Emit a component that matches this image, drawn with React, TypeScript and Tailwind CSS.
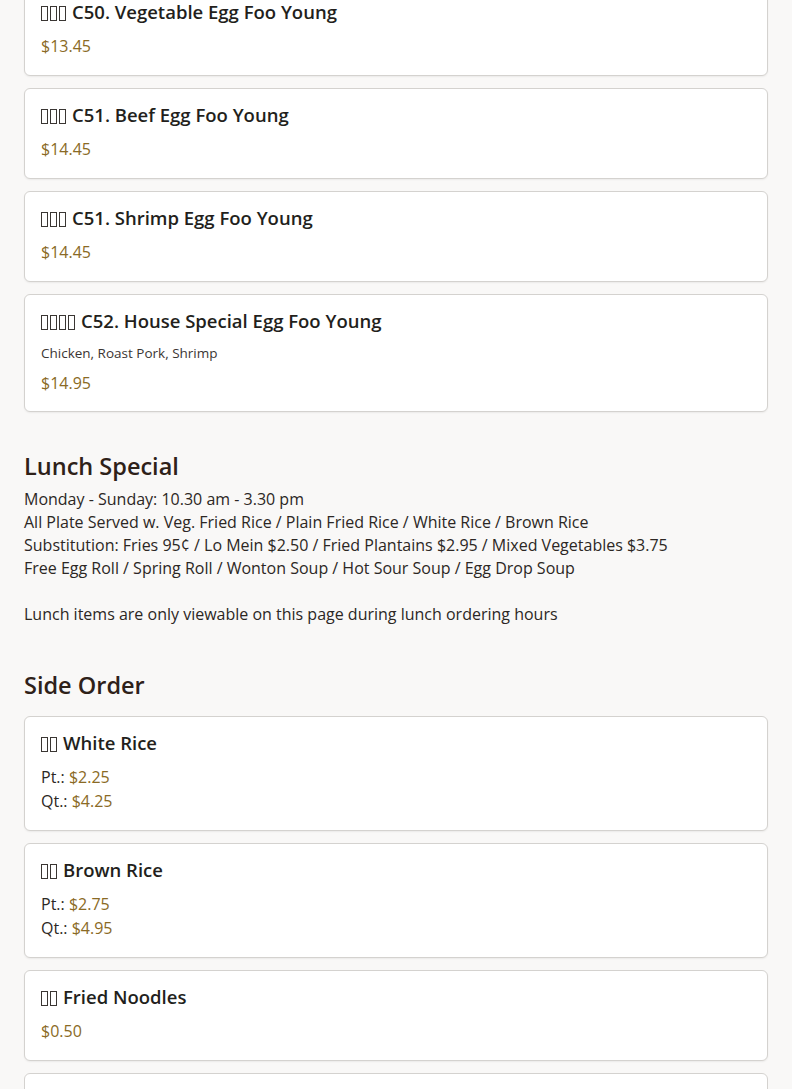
import React from "react";

type Item = {
  zh: number;
  name: string;
  desc?: string;
  price?: string;
  sizes?: { label: string; price: string }[];
};

// zh = number of Chinese glyphs shown as missing-glyph boxes in the original
const eggFooYoung: Item[] = [
  { zh: 3, name: "C50. Vegetable Egg Foo Young", price: "$13.45" },
  { zh: 3, name: "C51. Beef Egg Foo Young", price: "$14.45" },
  { zh: 3, name: "C51. Shrimp Egg Foo Young", price: "$14.45" },
  {
    zh: 4,
    name: "C52. House Special Egg Foo Young",
    desc: "Chicken, Roast Pork, Shrimp",
    price: "$14.95",
  },
];

const sideOrder: Item[] = [
  {
    zh: 2,
    name: "White Rice",
    sizes: [
      { label: "Pt.:", price: "$2.25" },
      { label: "Qt.:", price: "$4.25" },
    ],
  },
  {
    zh: 2,
    name: "Brown Rice",
    sizes: [
      { label: "Pt.:", price: "$2.75" },
      { label: "Qt.:", price: "$4.95" },
    ],
  },
  { zh: 2, name: "Fried Noodles", price: "$0.50" },
];

function Tofu({ count }: { count: number }) {
  return (
    <span aria-hidden className="inline-flex gap-[2px] mr-[6px] align-[-2px]">
      {Array.from({ length: count }).map((_, i) => (
        <span key={i} className="inline-block w-[7px] h-[15px] border border-[#3a3633]" />
      ))}
    </span>
  );
}

function MenuCard({ item }: { item: Item }) {
  return (
    <div
      className={`bg-white border border-[#d4d2cf] rounded-[6px] shadow-[0_1px_2px_rgba(0,0,0,0.06)] px-4 pt-[14px] ${
        item.desc ? "pb-4" : "pb-[17px]"
      }`}
    >
      <h3 className="text-[18.5px] leading-6 font-semibold text-[#231f1c]">
        <Tofu count={item.zh} />
        {item.name}
      </h3>
      {item.desc && <p className="mt-[10px] text-[13.5px] leading-5 text-[#3b3532]">{item.desc}</p>}
      {item.price && (
        <p className={`${item.desc ? "mt-2" : "mt-[10px]"} text-[16px] leading-6 text-[#8a6a25]`}>{item.price}</p>
      )}
      {item.sizes && (
        <div className="mt-[10px]">
          {item.sizes.map((s) => (
            <p key={s.label} className="text-[16px] leading-6 text-[#2c2724]">
              {s.label} <span className="text-[#8a6a25]">{s.price}</span>
            </p>
          ))}
        </div>
      )}
    </div>
  );
}

export default function App() {
  return (
    <div className="min-h-screen bg-[#f9f8f7] font-['Open_Sans',sans-serif] overflow-hidden">
      <div className="px-6 -mt-[15px] pb-10">
        <div className="flex flex-col gap-3">
          {eggFooYoung.map((it) => (
            <MenuCard key={it.name} item={it} />
          ))}
        </div>

        <h2 className="mt-[38px] text-[23.5px] leading-8 font-semibold text-[#2e2119]">Lunch Special</h2>
        <div className="mt-[6px] text-[16px] leading-[23px] text-[#2c2724]">
          <p>Monday - Sunday: 10.30 am - 3.30 pm</p>
          <p>All Plate Served w. Veg. Fried Rice / Plain Fried Rice / White Rice / Brown Rice</p>
          <p>Substitution: Fries 95¢ / Lo Mein $2.50 / Fried Plantains $2.95 / Mixed Vegetables $3.75</p>
          <p>Free Egg Roll / Spring Roll / Wonton Soup / Hot Sour Soup / Egg Drop Soup</p>
          <p className="mt-[23px]">Lunch items are only viewable on this page during lunch ordering hours</p>
        </div>

        <h2 className="mt-[43px] text-[23.5px] leading-8 font-semibold text-[#2e2119]">Side Order</h2>
        <div className="mt-[15px] flex flex-col gap-3">
          {sideOrder.map((it) => (
            <MenuCard key={it.name} item={it} />
          ))}
          <div className="bg-white border border-[#d4d2cf] rounded-[6px] h-24" />
        </div>
      </div>
    </div>
  );
}
